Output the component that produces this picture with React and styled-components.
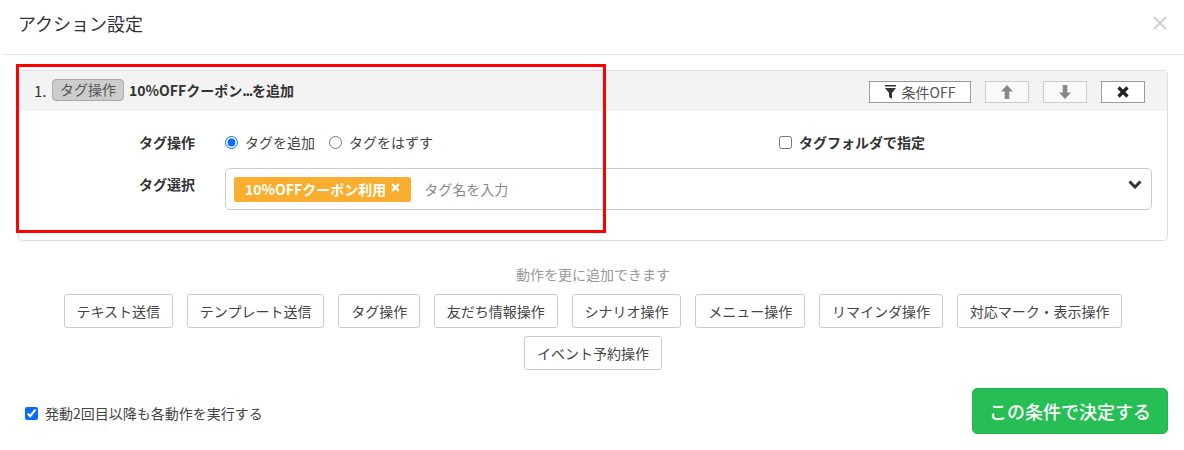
import React from 'react';
import styled, { createGlobalStyle } from 'styled-components';

const GlobalStyle = createGlobalStyle`
  html, body {
    margin: 0;
    padding: 0;
    background: #fff;
  }

  body {
    font-family: "Noto Sans CJK JP", "Noto Sans", sans-serif;
    font-size: 14px;
    color: #333;
  }

  * {
    box-sizing: border-box;
  }
`;

const actions = [
  'テキスト送信',
  'テンプレート送信',
  'タグ操作',
  '友だち情報操作',
  'シナリオ操作',
  'メニュー操作',
  'リマインダ操作',
  '対応マーク・表示操作',
  'イベント予約操作',
];

const App = () => {
  return (
    <Modal>
      <GlobalStyle />
      <ModalHeader>
        <Title>アクション設定</Title>
        <CloseButton aria-label="閉じる">
          <svg width="14" height="14" viewBox="0 0 14 14">
            <path d="M1 1l12 12M13 1L1 13" stroke="#cfcfcf" strokeWidth="2" fill="none" />
          </svg>
        </CloseButton>
      </ModalHeader>

      <Body>
        <Panel>
          <PanelHeader>
            <Number>1.</Number>
            <TypeBadge>タグ操作</TypeBadge>
            <PanelTitle>10%OFFクーポン<Ellipsis>...</Ellipsis>を追加</PanelTitle>
            <Tools>
              <ToolButton $width={102}>
                <svg width="11" height="14" viewBox="0 0 11 14">
                  <path d="M0 0h11v1.500H0zM0 3h11L7 8v6L4 12V8z" fill="#333" />
                </svg>
                条件OFF
              </ToolButton>
              <ToolButton $muted>
                <svg width="12" height="14" viewBox="0 0 12 14">
                  <path d="M6 0l6 6.500H8.300V14H3.700V6.500H0z" fill="#888" />
                </svg>
              </ToolButton>
              <ToolButton $muted>
                <svg width="12" height="14" viewBox="0 0 12 14">
                  <path d="M6 14l6-6.500H8.300V0H3.700v7.500H0z" fill="#888" />
                </svg>
              </ToolButton>
              <ToolButton>
                <svg width="12" height="12" viewBox="0 0 12 12">
                  <path d="M1.500 1.500l9 9M10.500 1.500l-9 9" stroke="#222" strokeWidth="3.200" fill="none" />
                </svg>
              </ToolButton>
            </Tools>
          </PanelHeader>

          <PanelBody>
            <FieldRow>
              <FieldLabel>タグ操作</FieldLabel>
              <RadioGroup>
                <Choice>
                  <Radio type="radio" name="tag-action" defaultChecked />
                  タグを追加
                </Choice>
                <Choice>
                  <Radio type="radio" name="tag-action" />
                  タグをはずす
                </Choice>
              </RadioGroup>
              <FolderChoice>
                <CheckBox type="checkbox" />
                タグフォルダで指定
              </FolderChoice>
            </FieldRow>

            <SelectRow>
              <SelectLabel>タグ選択</SelectLabel>
              <TagSelect>
                <Chip>
                  10%OFFクーポン利用
                  <svg width="9" height="9" viewBox="0 0 9 9">
                    <path d="M1.200 1.200l6.600 6.600M7.800 1.200L1.200 7.800" stroke="#fff" strokeWidth="2.500" fill="none" />
                  </svg>
                </Chip>
                <Placeholder>タグ名を入力</Placeholder>
                <Chevron width="14" height="9" viewBox="0 0 14 9">
                  <path d="M1.500 1.500L7 7l5.500-5.500" stroke="#333" strokeWidth="3" fill="none" />
                </Chevron>
              </TagSelect>
            </SelectRow>
          </PanelBody>
        </Panel>

        <Highlight />

        <AddSection>
          <AddHint>動作を更に追加できます</AddHint>
          <ActionButtons>
            {actions.map((action) => (
              <ActionButton key={action}>{action}</ActionButton>
            ))}
          </ActionButtons>
        </AddSection>

        <Footer>
          <RepeatChoice>
            <CheckBox type="checkbox" defaultChecked />
            発動2回目以降も各動作を実行する
          </RepeatChoice>
          <SubmitButton>この条件で決定する</SubmitButton>
        </Footer>
      </Body>
    </Modal>
  );
};

const Modal = styled.div`
  position: relative;
  width: 1184px;
  height: 450px;
  overflow: hidden;
  background: #fff;
`;

const ModalHeader = styled.div`
  display: flex;
  align-items: center;
  justify-content: space-between;
  height: 55px;
  margin-left: 3px;
  padding: 0 17px 8px 15px;
  border-bottom: 1px solid #e5e5e5;
`;

const Title = styled.div`
  font-size: 18px;
  line-height: 26px;
  color: #333;
`;

const CloseButton = styled.button`
  display: flex;
  padding: 0;
  border: 0;
  background: none;
`;

const Body = styled.div`
  padding: 15px 16px 0 18px;
`;

const Panel = styled.div`
  height: 171px;
  border: 1px solid #ddd;
  border-radius: 4px;
`;

const PanelHeader = styled.div`
  display: flex;
  align-items: center;
  height: 40px;
  padding: 0 22px 0 15px;
  background: #f3f3f3;
`;

const Number = styled.span`
  width: 18px;
  margin-top: -1px;
  font-size: 15px;
`;

const TypeBadge = styled.span`
  width: 72px;
  height: 22px;
  margin-top: -2px;
  margin-right: 5px;
  border: 1px solid #aaa;
  border-radius: 4px;
  background: #ccc;
  color: #555;
  font-size: 14px;
  line-height: 19px;
  text-align: center;
  white-space: nowrap;
`;

const PanelTitle = styled.span`
  margin-top: -2px;
  font-weight: 700;
  color: #333;
`;

const Ellipsis = styled.span`
  letter-spacing: -1.3px;
`;

const Tools = styled.div`
  display: flex;
  gap: 14px;
  margin-top: 2px;
  margin-left: auto;
`;

const ToolButton = styled.button`
  display: flex;
  align-items: center;
  justify-content: center;
  gap: 6px;
  width: ${(props) => props.$width || 44}px;
  height: 22px;
  padding: 0;
  border: 1px solid ${(props) => (props.$muted ? '#ccc' : '#999')};
  background: ${(props) => (props.$muted ? '#f9f9f9' : '#fff')};
  color: #555;
  font-family: inherit;
  font-size: 14px;
`;

const PanelBody = styled.div`
  padding: 20px 15px 0 120px;
`;

const FieldRow = styled.div`
  display: flex;
  align-items: center;
  height: 22px;
`;

const FieldLabel = styled.div`
  width: 86px;
  font-weight: 700;
  color: #333;
`;

const RadioGroup = styled.div`
  display: flex;
  gap: 14px;
  width: 554px;
`;

const Choice = styled.label`
  display: flex;
  align-items: center;
  gap: 7px;
  color: #444;
`;

const Radio = styled.input`
  width: 13px;
  height: 13px;
  margin: 0;
  accent-color: #0a6cff;
`;

const CheckBox = styled.input`
  width: 13px;
  height: 13px;
  margin: 0;
  accent-color: #0a6cff;
`;

const FolderChoice = styled.label`
  display: flex;
  align-items: center;
  gap: 7px;
  font-weight: 700;
  color: #333;
`;

const SelectRow = styled.div`
  display: flex;
  align-items: flex-start;
  margin-top: 15px;
`;

const SelectLabel = styled(FieldLabel)`
  line-height: 22px;
  margin-top: 5px;
`;

const TagSelect = styled.div`
  position: relative;
  display: flex;
  align-items: center;
  flex: 1;
  height: 42px;
  padding: 0 8px;
  border: 1px solid #ccc;
  border-radius: 5px;
`;

const Chip = styled.span`
  display: flex;
  align-items: flex-start;
  gap: 5px;
  height: 25px;
  padding: 0 11px;
  border-radius: 2px;
  background: #f9ae2f;
  color: #fff;
  font-weight: 700;
  line-height: 25px;
  white-space: nowrap;

  svg {
    margin-top: 6px;
  }
`;

const Placeholder = styled.span`
  margin-left: 13px;
  color: #888;
`;

const Chevron = styled.svg`
  position: absolute;
  top: 11px;
  right: 9px;
`;

const Highlight = styled.div`
  position: absolute;
  top: 64px;
  left: 16px;
  width: 590px;
  height: 169px;
  border: 3px solid #f00;
  pointer-events: none;
`;

const AddSection = styled.div`
  margin-top: 22px;
  text-align: center;
`;

const AddHint = styled.div`
  height: 22px;
  color: #999;
  line-height: 22px;
`;

const ActionButtons = styled.div`
  display: flex;
  flex-wrap: wrap;
  justify-content: center;
  gap: 8px 14px;
  margin-top: 9px;
`;

const ActionButton = styled.button`
  height: 34px;
  padding: 0 11.87px;
  border: 1px solid #ccc;
  border-radius: 3px;
  background: #fff;
  color: #444;
  font-family: inherit;
  font-size: 14px;
  white-space: nowrap;
`;

const Footer = styled.div`
  display: flex;
  align-items: center;
  justify-content: space-between;
  margin-top: 18px;
  padding-left: 7px;
`;

const RepeatChoice = styled.label`
  display: flex;
  align-items: center;
  gap: 7px;
  margin-top: 4px;
  color: #444;
`;

const SubmitButton = styled.button`
  width: 196px;
  height: 46px;
  padding: 0;
  border: 1px solid #22b550;
  border-radius: 5px;
  background: #27bf55;
  color: #fff;
  font-family: inherit;
  font-size: 18px;
  font-weight: 500;
`;

export default App;
